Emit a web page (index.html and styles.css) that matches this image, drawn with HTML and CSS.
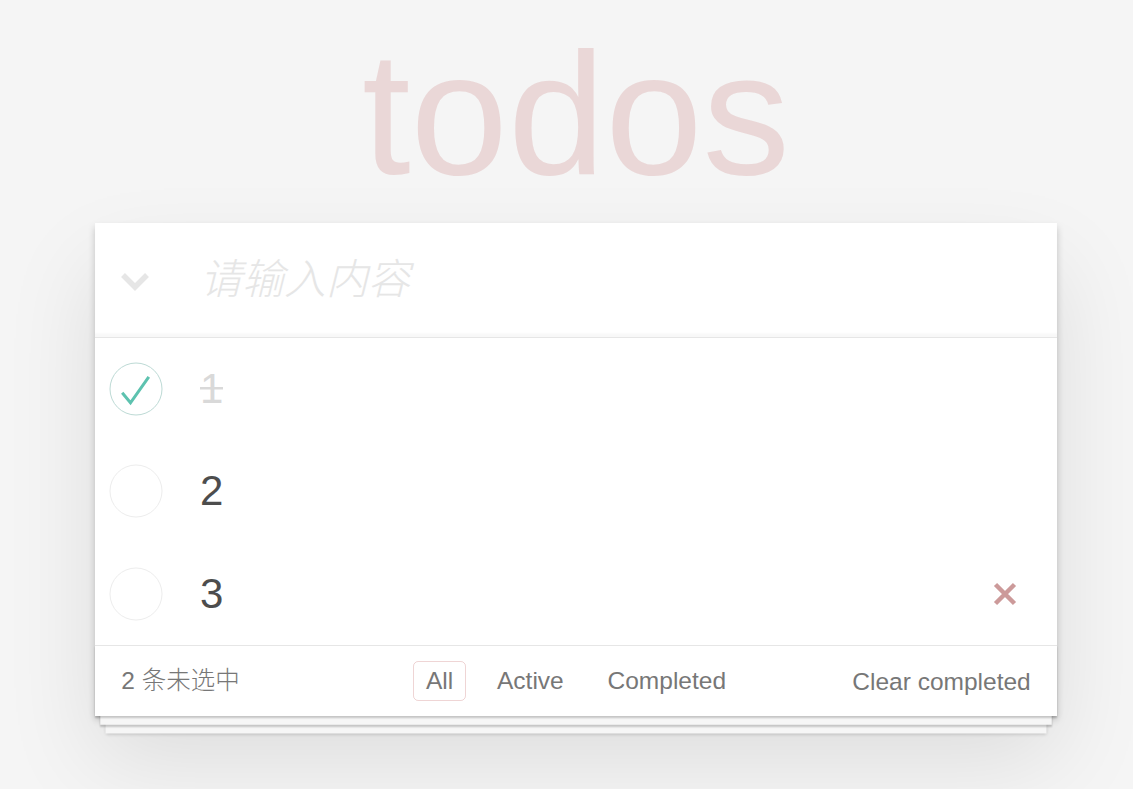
FILE: index.html
```html
<!DOCTYPE html>
<html lang="zh-CN">
<head>
<meta charset="utf-8">
<title>todos</title>
<link rel="stylesheet" href="styles.css">
</head>
<body>
<div class="page">
  <h1 class="title">todos</h1>
  <section class="todoapp">
    <header class="header">
      <label class="toggle-all" aria-label="Mark all as complete">
        <svg width="30" height="20" viewBox="0 0 30 20"><polyline points="3,3 15,15 27,3" fill="none" stroke="#e6e6e6" stroke-width="5.5"/></svg>
      </label>
      <input class="new-todo" placeholder="请输入内容">
    </header>
    <ul class="todo-list">
      <li class="todo is-completed">
        <span class="toggle">
          <svg width="54" height="54" viewBox="0 0 54 54"><circle cx="27" cy="27" r="26" fill="none" stroke="#bddad5" stroke-width="1"/><polyline points="13.2,30.8 21.5,40.8 39.8,14.8" fill="none" stroke="#5dc2af" stroke-width="3"/></svg>
        </span>
        <label class="todo-label"><span class="strike">1</span></label>
      </li>
      <li class="todo">
        <span class="toggle">
          <svg width="54" height="54" viewBox="0 0 54 54"><circle cx="27" cy="27" r="26" fill="none" stroke="#ededed" stroke-width="1"/></svg>
        </span>
        <label class="todo-label">2</label>
      </li>
      <li class="todo">
        <span class="toggle">
          <svg width="54" height="54" viewBox="0 0 54 54"><circle cx="27" cy="27" r="26" fill="none" stroke="#ededed" stroke-width="1"/></svg>
        </span>
        <label class="todo-label">3</label>
        <button class="destroy" aria-label="Delete">
          <svg width="24" height="24" viewBox="0 0 24 24"><path d="M2.5 2.5 L21.5 21.5 M21.5 2.5 L2.5 21.5" fill="none" stroke="#cc9a9a" stroke-width="4.5"/></svg>
        </button>
      </li>
    </ul>
    <footer class="footer">
      <span class="todo-count">2 条未选中</span>
      <ul class="filters">
        <li class="filter"><a class="filter-link selected">All</a></li>
        <li class="filter"><a class="filter-link">Active</a></li>
        <li class="filter"><a class="filter-link">Completed</a></li>
      </ul>
      <span class="clear-cell"><button class="clear-completed">Clear completed</button></span>
    </footer>
  </section>
</div>
</body>
</html>
```

FILE: styles.css
```css
html, body {
  margin: 0;
  padding: 0;
}

body {
  background: #f5f5f5;
  color: #4d4d4d;
  font-family: "Liberation Sans", Arial, "Noto Sans CJK SC", sans-serif;
  font-weight: 300;
  -webkit-font-smoothing: antialiased;
}

.page {
  padding: 26px 0 90px;
  margin-left: 95px;
  width: 962px;
}

.title {
  margin: 0 0 22px;
  height: 175px;
  font-size: 175px;
  line-height: 175px;
  font-weight: 100;
  text-align: center;
  color: rgba(175, 47, 47, 0.15);
}

.todoapp {
  background: #fff;
  box-shadow: 0 3.5px 7px rgba(0, 0, 0, 0.2), 0 43.75px 87.5px rgba(0, 0, 0, 0.1);
}

.header {
  display: flex;
  align-items: center;
  height: 114px;
  box-shadow: inset 0 -3.5px 1.75px rgba(0, 0, 0, 0.03);
}

.toggle-all {
  flex: 0 0 105px;
  box-sizing: border-box;
  padding-left: 25px;
  padding-top: 3px;
  display: flex;
  align-items: center;
}

.new-todo {
  flex: 1;
  height: 100%;
  border: 0;
  outline: none;
  background: transparent;
  padding: 0;
  margin: 0;
  font-family: "Liberation Sans", "Noto Sans CJK SC", sans-serif;
  font-size: 42px;
  color: #4d4d4d;
}

.new-todo::placeholder {
  font-style: italic;
  font-weight: 300;
  color: #e6e6e6;
}

.todo-list {
  margin: 0;
  padding: 0;
  list-style: none;
  border-top: 1px solid #e6e6e6;
}

.todo {
  display: flex;
  align-items: center;
  height: 102.33px;
  font-size: 42px;
}

.toggle {
  flex: 0 0 105px;
  box-sizing: border-box;
  padding-left: 13.5px;
  display: flex;
  align-items: center;
}

.todo-label {
  flex: 1;
  line-height: 1.2;
  color: #4d4d4d;
}

.is-completed .todo-label {
  color: #d9d9d9;
}

.strike {
  background: linear-gradient(#d9d9d9, #d9d9d9) no-repeat 0 50% / 100% 2.5px;
}

.destroy {
  flex: 0 0 70px;
  height: 70px;
  margin-right: 17.5px;
  padding: 0;
  border: 0;
  background: none;
  display: flex;
  align-items: center;
  justify-content: center;
}

.footer {
  display: grid;
  grid-template-columns: 1fr auto 1fr;
  align-items: center;
  padding: 0 26.25px;
  box-sizing: border-box;
  height: 71px;
  border-top: 1px solid #e6e6e6;
  color: #777;
  font-size: 24.5px;
  line-height: 35px;
  box-shadow: 0 1.75px 1.75px rgba(0, 0, 0, 0.2),
    0 14px 0 -5.25px #f6f6f6,
    0 15.75px 1.75px -5.25px rgba(0, 0, 0, 0.2),
    0 28px 0 -10.5px #f6f6f6,
    0 29.75px 3.5px -10.5px rgba(0, 0, 0, 0.2);
}

.todo-count {
  text-align: left;
  font-family: "Liberation Sans", "Noto Sans CJK SC", sans-serif;
}

.filters {
  margin: 0;
  padding: 0;
  list-style: none;
  text-align: center;
  white-space: nowrap;
}

.filter {
  display: inline;
}

.filter-link {
  color: inherit;
  margin: 5.25px;
  padding: 5.25px 12.25px;
  border: 1px solid transparent;
  border-radius: 5.25px;
}

.filter-link.selected {
  border-color: rgba(175, 47, 47, 0.2);
}

.clear-cell {
  text-align: right;
}

.clear-completed {
  margin: 0;
  padding: 0;
  border: 0;
  background: none;
  font-family: inherit;
  font-size: 24.5px;
  line-height: 35px;
  color: #777;
  position: relative;
  top: 1px;
}
```
